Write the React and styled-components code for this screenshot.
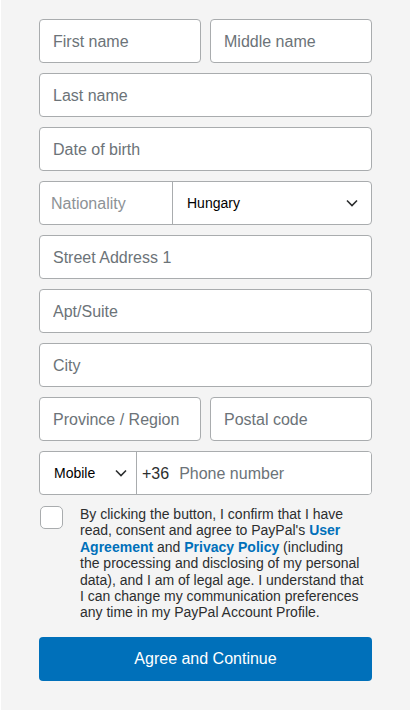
import React from "react";
import styled, { createGlobalStyle } from "styled-components";

const Global = createGlobalStyle`
  html, body { margin: 0; padding: 0; background: #fff; }
  body { font-family: "Liberation Sans", Arial, sans-serif; }
  * { box-sizing: border-box; }
`;

const Page = styled.div`
  width: 412px;
  height: 713px;
  padding: 0 2px 3px 1px;
  background: #fff;
`;

const Panel = styled.div`
  height: 100%;
  background: #f4f4f4;
  padding: 19px 38px 0 38px;
`;

const Form = styled.form`
  display: flex;
  flex-direction: column;
  gap: 10px;
`;

const Row = styled.div`
  display: grid;
  grid-template-columns: 1fr 1fr;
  gap: 9px;
`;

const Field = styled.input`
  width: 100%;
  height: 44px;
  border: 1px solid #a9acae;
  border-radius: 4px;
  background: #fff;
  padding: 1px 13px 0;
  font-family: "Liberation Sans", Arial, sans-serif;
  font-size: 16px;
  color: #2c2e2f;
  outline: none;
  &::placeholder { color: #6c7378; }
`;

const Combo = styled.div`
  display: flex;
  align-items: stretch;
  height: 44px;
  border: 1px solid #a9acae;
  border-radius: 4px;
  background: #fff;
  overflow: hidden;
`;

const Label = styled.div`
  width: ${p => p.$w}px;
  flex: none;
  display: flex;
  align-items: center;
  padding: 2px 0 0 11px;
  font-size: 16px;
  color: #8d9296;
  border-right: 1px solid #a9acae;
`;

const Select = styled.div`
  flex: ${p => (p.$w ? "none" : "1")};
  width: ${p => (p.$w ? `${p.$w}px` : "auto")};
  display: flex;
  align-items: center;
  justify-content: space-between;
  padding: 0 ${p => p.$pr}px 0 ${p => p.$pl}px;
  font-size: 14px;
  color: #000;
  border-right: ${p => (p.$divider ? "1px solid #a9acae" : "none")};
`;

const Prefix = styled.span`
  font-size: 16px;
  color: #2c2e2f;
  padding: 1px 10px 0 5px;
  display: flex;
  align-items: center;
`;

const Bare = styled.input`
  flex: 1;
  min-width: 0;
  border: none;
  outline: none;
  font-family: "Liberation Sans", Arial, sans-serif;
  font-size: 16px;
  padding: 1px 0 0;
  &::placeholder { color: #6c7378; }
`;

const Consent = styled.div`
  display: flex;
  gap: 17px;
  padding: 0 7px 0 1px;
`;

const Box = styled.span`
  flex: none;
  width: 23px;
  height: 23px;
  margin-top: 1px;
  border: 1px solid #a9acae;
  border-radius: 5px;
  background: #fff;
`;

const Terms = styled.p`
  margin: 1px 0 0;
  font-size: 14px;
  line-height: 16.4px;
  color: #2c2e2f;
  a { color: #0070ba; font-weight: bold; text-decoration: none; }
`;

const Button = styled.button`
  margin-top: 6px;
  height: 44px;
  border: none;
  border-radius: 4px;
  background: #0070ba;
  color: #fff;
  font-family: "Liberation Sans", Arial, sans-serif;
  font-size: 16px;
`;

const Chevron = () => (
  <svg width="12" height="8" viewBox="0 0 12 8" fill="none" stroke="#2c2e2f" strokeWidth="1.6">
    <path d="M1 1.5l5 5 5-5" />
  </svg>
);

export default function App() {
  return (
    <Page>
      <Global />
      <Panel>
        <Form onSubmit={e => e.preventDefault()}>
          <Row>
            <Field placeholder="First name" />
            <Field placeholder="Middle name" />
          </Row>
          <Field placeholder="Last name" />
          <Field placeholder="Date of birth" />
          <Combo>
            <Label $w={133}>Nationality</Label>
            <Select $pl={14} $pr={13}>
              Hungary
              <Chevron />
            </Select>
          </Combo>
          <Field placeholder="Street Address 1" />
          <Field placeholder="Apt/Suite" />
          <Field placeholder="City" />
          <Row>
            <Field placeholder="Province / Region" />
            <Field placeholder="Postal code" />
          </Row>
          <Combo>
            <Select $w={97} $pl={14} $pr={9} $divider>
              Mobile
              <Chevron />
            </Select>
            <Prefix>+36</Prefix>
            <Bare placeholder="Phone number" />
          </Combo>
          <Consent>
            <Box />
            <Terms>
              By clicking the button, I confirm that I have read, consent and agree to PayPal's{" "}
              <a href="#">User Agreement</a> and <a href="#">Privacy Policy</a> (including the
              processing and disclosing of my personal data), and I am of legal age. I understand
              that I can change my communication preferences any time in my PayPal Account Profile.
            </Terms>
          </Consent>
          <Button type="button">Agree and Continue</Button>
        </Form>
      </Panel>
    </Page>
  );
}
